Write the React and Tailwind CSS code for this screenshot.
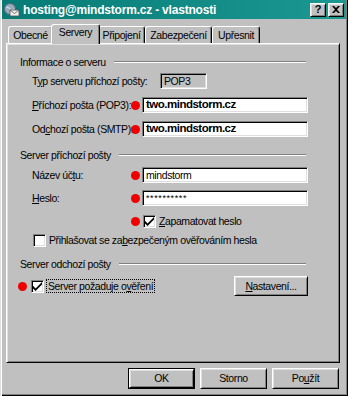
const raised =
  'border border-t-white border-l-white border-r-black border-b-black shadow-[inset_1px_1px_#dfdfdf,inset_-1px_-1px_#808080]';
const sunken =
  'border border-t-[#808080] border-l-[#808080] border-r-white border-b-white shadow-[inset_1px_1px_#000,inset_-1px_-1px_#dfdfdf]';

function U({ children }) {
  return <span className="underline underline-offset-[1px]">{children}</span>;
}

function Dot({ className = '' }) {
  return <span className={`block w-[9px] h-[9px] rounded-full bg-[#ee0000] shrink-0 ${className}`} />;
}

function Check({ checked }) {
  return (
    <span className={`w-[13px] h-[13px] bg-white shrink-0 flex items-center justify-center ${sunken}`}>
      {checked && (
        <svg width="9" height="9" viewBox="0 0 7 7">
          <path d="M0 2v2l2 2 5-5V-1L2 4z" fill="#000" transform="translate(0 1)" />
        </svg>
      )}
    </span>
  );
}

function GroupHead({ children }) {
  return (
    <div className="h-[14px] flex items-center">
      <span className="whitespace-nowrap">{children}</span>
      <span className="flex-1 ml-[8px] mr-[2px] h-[2px] border-t border-t-[#808080] border-b border-b-white" />
    </div>
  );
}

function Field({ label, value, bold, small, mt }) {
  return (
    <div className={`flex items-center h-[16px] ${mt}`}>
      <span className="ml-[12px] w-[100px] whitespace-nowrap">{label}</span>
      <Dot className="-ml-[1px]" />
      <span
        className={`ml-[2px] flex-1 h-[16px] bg-white flex items-center pl-[3px] ${sunken} ${
          bold ? 'font-bold text-[11.5px] tracking-[-0.5px]' : ''
        } ${small ? 'text-[9px] tracking-[0.6px] pt-[1px]' : ''}`}
      >
        {value}
      </span>
    </div>
  );
}

function Btn({ children, def, className = '' }) {
  return (
    <div className={`${def ? 'border border-black' : ''} ${className}`}>
      <div className={`h-full w-full flex items-center justify-center ${raised}`}>{children}</div>
    </div>
  );
}

function Tab({ label, active }) {
  if (active)
    return (
      <div className="relative z-10 -mx-[2px] h-[20px] -mb-[1px] bg-[#c0c0c0] border-l border-t border-r border-l-white border-t-white border-r-black rounded-t-[3px] shadow-[inset_-1px_0_#808080] flex items-start justify-center pt-[2px]">
        <span className="whitespace-nowrap">{label}</span>
      </div>
    );
  return (
    <div className="h-[17px] border-l border-t border-r border-l-white border-t-white border-r-black rounded-t-[3px] shadow-[inset_-1px_0_#808080] flex items-start justify-center pt-[3px]">
      <span className="whitespace-nowrap">{label}</span>
    </div>
  );
}

function TitleIcon() {
  return (
    <svg width="16" height="14" viewBox="0 0 16 14">
      <circle cx="6" cy="6" r="5.5" fill="#9ab" stroke="#567" strokeWidth="1" />
      <path d="M2 4c2 1 3 0 4 2s2 1 4 0" stroke="#cde" strokeWidth="1.2" fill="none" />
      <rect x="6" y="7" width="9" height="6" fill="#eee" stroke="#555" strokeWidth="0.8" />
      <path d="M6 7l4.5 3.5L15 7" stroke="#555" strokeWidth="0.8" fill="none" />
    </svg>
  );
}

export default function App() {
  return (
    <div
      className="w-[348px] h-[396px] bg-[#c0c0c0] text-black text-[10.5px] leading-none tracking-[-0.4px] overflow-hidden flex flex-col shadow-[inset_1px_0_#dfdfdf,inset_2px_0_#fff,inset_-1px_-1px_#000,inset_-2px_-2px_#808080]"
      style={{ fontFamily: "'Liberation Sans', Arial, sans-serif" }}
    >
      {/* title bar */}
      <div className="mx-[2px] h-[19px] bg-gradient-to-r from-[#067b76] to-[#1b9892] flex items-center pl-[2px] pr-[2px]">
        <TitleIcon />
        <span className="ml-[3px] text-white font-bold text-[12px] tracking-[-0.2px]">
          hosting@mindstorm.cz - vlastnosti
        </span>
        <div className="ml-auto flex gap-[2px]">
          <div className={`w-[16px] h-[14px] bg-[#c0c0c0] flex items-center justify-center font-bold text-[11px] ${raised}`}>
            ?
          </div>
          <div className={`w-[16px] h-[14px] bg-[#c0c0c0] flex items-center justify-center ${raised}`}>
            <svg width="8" height="7" viewBox="0 0 8 7">
              <path d="M0 0h2l2 2 2-2h2L5 3.5 8 7H6L4 5 2 7H0l3-3.5z" fill="#000" />
            </svg>
          </div>
        </div>
      </div>

      {/* tabs */}
      <div className="mt-[5px] h-[19px] flex items-end pl-[8px]">
        <div className="w-[45px]"><Tab label="Obecné" /></div>
        <div className="w-[45px]"><Tab label="Servery" active /></div>
        <div className="w-[47px]"><Tab label="Připojení" /></div>
        <div className="w-[67px]"><Tab label="Zabezpečení" /></div>
        <div className="w-[48px]"><Tab label="Upřesnit" /></div>
      </div>

      {/* panel */}
      <div className="ml-[6px] w-[334px] h-[320px] border border-t-white border-l-white border-r-black border-b-black shadow-[inset_1px_1px_#dfdfdf,inset_-1px_-1px_#808080]">
        <div className="pl-[13px] pr-[31px] pt-[11px] flex flex-col">
          <GroupHead>Informace o serveru</GroupHead>

          <div className="flex items-center h-[16px] mt-[4px]">
            <span className="ml-[12px] w-[128px] whitespace-nowrap">
              T<U>y</U>p serveru příchozí pošty:
            </span>
            <span className={`w-[47px] h-[16px] flex items-center pl-[3px] ${sunken}`}>POP3</span>
          </div>

          <Field
            mt="mt-[8px]"
            label={<><U>P</U>říchozí pošta (POP3):</>}
            value="two.mindstorm.cz"
            bold
          />
          <Field
            mt="mt-[8px]"
            label={<>Od<U>c</U>hozí pošta (SMTP):</>}
            value="two.mindstorm.cz"
            bold
          />

          <div className="mt-[11px]">
            <GroupHead>Server příchozí pošty</GroupHead>
          </div>

          <Field mt="mt-[5px]" label={<>Název úč<U>t</U>u:</>} value="mindstorm" />
          <Field mt="mt-[7px]" label={<><U>H</U>eslo:</>} value="**********" small />

          <div className="flex items-center h-[13px] mt-[9px]">
            <Dot className="ml-[111px]" />
            <span className="ml-[3px]"><Check checked /></span>
            <span className="ml-[3px]"><U>Z</U>apamatovat heslo</span>
          </div>

          <div className="flex items-center h-[13px] mt-[6px]">
            <span className="ml-[13px]"><Check /></span>
            <span className="ml-[3px]">
              Přihlašovat se za<U>b</U>ezpečeným ověřováním hesla
            </span>
          </div>

          <div className="mt-[10px]">
            <GroupHead>Server odchozí pošty</GroupHead>
          </div>

          <div className="flex items-center h-[20px] mt-[5px]">
            <Dot className="-ml-[2px]" />
            <span className="ml-[4px]"><Check checked /></span>
            <span className="ml-[2px] px-[1px] py-[1px] border border-dotted border-black">
              Server požaduje o<U>v</U>ěření
            </span>
            <Btn className="ml-auto w-[74px] h-[20px]">
              <U>N</U>astavení...
            </Btn>
          </div>
        </div>
      </div>

      {/* bottom buttons */}
      <div className="mt-[5px] flex justify-end gap-[5px] pr-[9px]">
        <Btn def className="w-[67px] h-[21px]">OK</Btn>
        <Btn className="w-[67px] h-[21px]">Storno</Btn>
        <Btn className="w-[67px] h-[21px]">Po<U>u</U>žít</Btn>
      </div>
    </div>
  );
}
